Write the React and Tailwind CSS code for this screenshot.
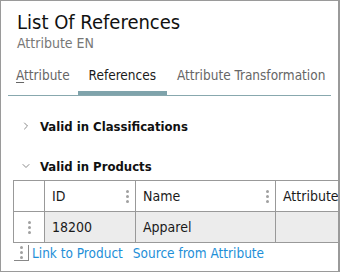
import { ChevronRight, ChevronDown } from 'lucide-react';

const font = { fontFamily: '"DejaVu Sans Condensed", "DejaVu Sans", sans-serif' };

function Dots({ className = '' }) {
  return (
    <span className={`flex flex-col gap-[2px] ${className}`}>
      <span className="w-[3px] h-[3px] rounded-full bg-[#a0a0a0]" />
      <span className="w-[3px] h-[3px] rounded-full bg-[#a0a0a0]" />
      <span className="w-[3px] h-[3px] rounded-full bg-[#a0a0a0]" />
    </span>
  );
}

export default function App() {
  return (
    <div
      className="w-[340px] h-[272px] border border-[#9a9a9a] border-r-2 bg-white overflow-hidden relative"
      style={font}
    >
      {/* header */}
      <div className="pl-[16px] pt-[9px]">
        <div className="text-[20px] leading-[24px] text-[#111]">List Of References</div>
        <div className="text-[14px] leading-[16px] text-[#777] mt-[1px]">Attribute EN</div>
      </div>

      {/* tabs */}
      <div className="mx-[7px] mt-[13px] border-b border-[#88a8ae] flex text-[13.5px] whitespace-nowrap">
        <div className="px-[8px] pb-[6px] pt-[1px] text-[#666] border-b-[4px] border-transparent">
          <span className="underline underline-offset-2 decoration-[#666]">A</span>ttribute
        </div>
        <div className="px-[11px] pb-[6px] pt-[1px] text-[#1a1a1a] border-b-[4px] border-[#7fa3ab]">References</div>
        <div className="px-[10px] pb-[6px] pt-[1px] text-[#666] border-b-[4px] border-transparent">Attribute Transformation</div>
      </div>

      {/* sections */}
      <div className="pl-[19px] mt-[21px] flex items-center gap-[8px] h-[18px]">
        <ChevronRight size={12} strokeWidth={2} className="text-[#8a8a8a]" />
        <span className="text-[13px] font-bold text-[#111]">Valid in Classifications</span>
      </div>
      <div className="pl-[19px] mt-[22px] flex items-center gap-[8px] h-[18px]">
        <ChevronDown size={12} strokeWidth={2} className="text-[#8a8a8a]" />
        <span className="text-[13px] font-bold text-[#111]">Valid in Products</span>
      </div>

      {/* table */}
      <div className="ml-[12px] mt-[5px] w-[400px] text-[14px] text-[#1a1a1a]">
        <div className="grid grid-cols-[31px_91px_140px_139px] border-t border-l border-[#999]">
          <div className="h-[31px] border-r border-b border-[#999]" />
          <div className="h-[31px] border-r border-b border-[#999] flex items-center justify-between pl-[7px] pr-[6px]">
            <span>ID</span>
            <Dots />
          </div>
          <div className="h-[31px] border-r border-b border-[#999] flex items-center justify-between pl-[7px] pr-[6px]">
            <span>Name</span>
            <Dots />
          </div>
          <div className="h-[31px] border-r border-b border-[#999] flex items-center pl-[7px]">Attribute</div>

          <div className="h-[31px] border-r border-b border-[#999] flex items-center justify-center">
            <Dots />
          </div>
          <div className="h-[31px] border-r border-b border-[#999] bg-[#ececec] flex items-center pl-[7px]">18200</div>
          <div className="h-[31px] border-r border-b border-[#999] bg-[#ececec] flex items-center pl-[7px]">Apparel</div>
          <div className="h-[31px] border-r border-b border-[#999] bg-[#ececec]" />
        </div>

        <div className="flex items-center mt-[1px] h-[17px] pl-[1px] text-[13.5px]">
          <div className="w-[15px] h-[16px] border-b border-r border-[#888] flex items-center justify-center">
            <Dots />
          </div>
          <span className="ml-[3px] text-[#1e8fd8]">Link to Product</span>
          <span className="ml-[10px] text-[#1e8fd8]">Source from Attribute</span>
        </div>
      </div>
    </div>
  );
}
